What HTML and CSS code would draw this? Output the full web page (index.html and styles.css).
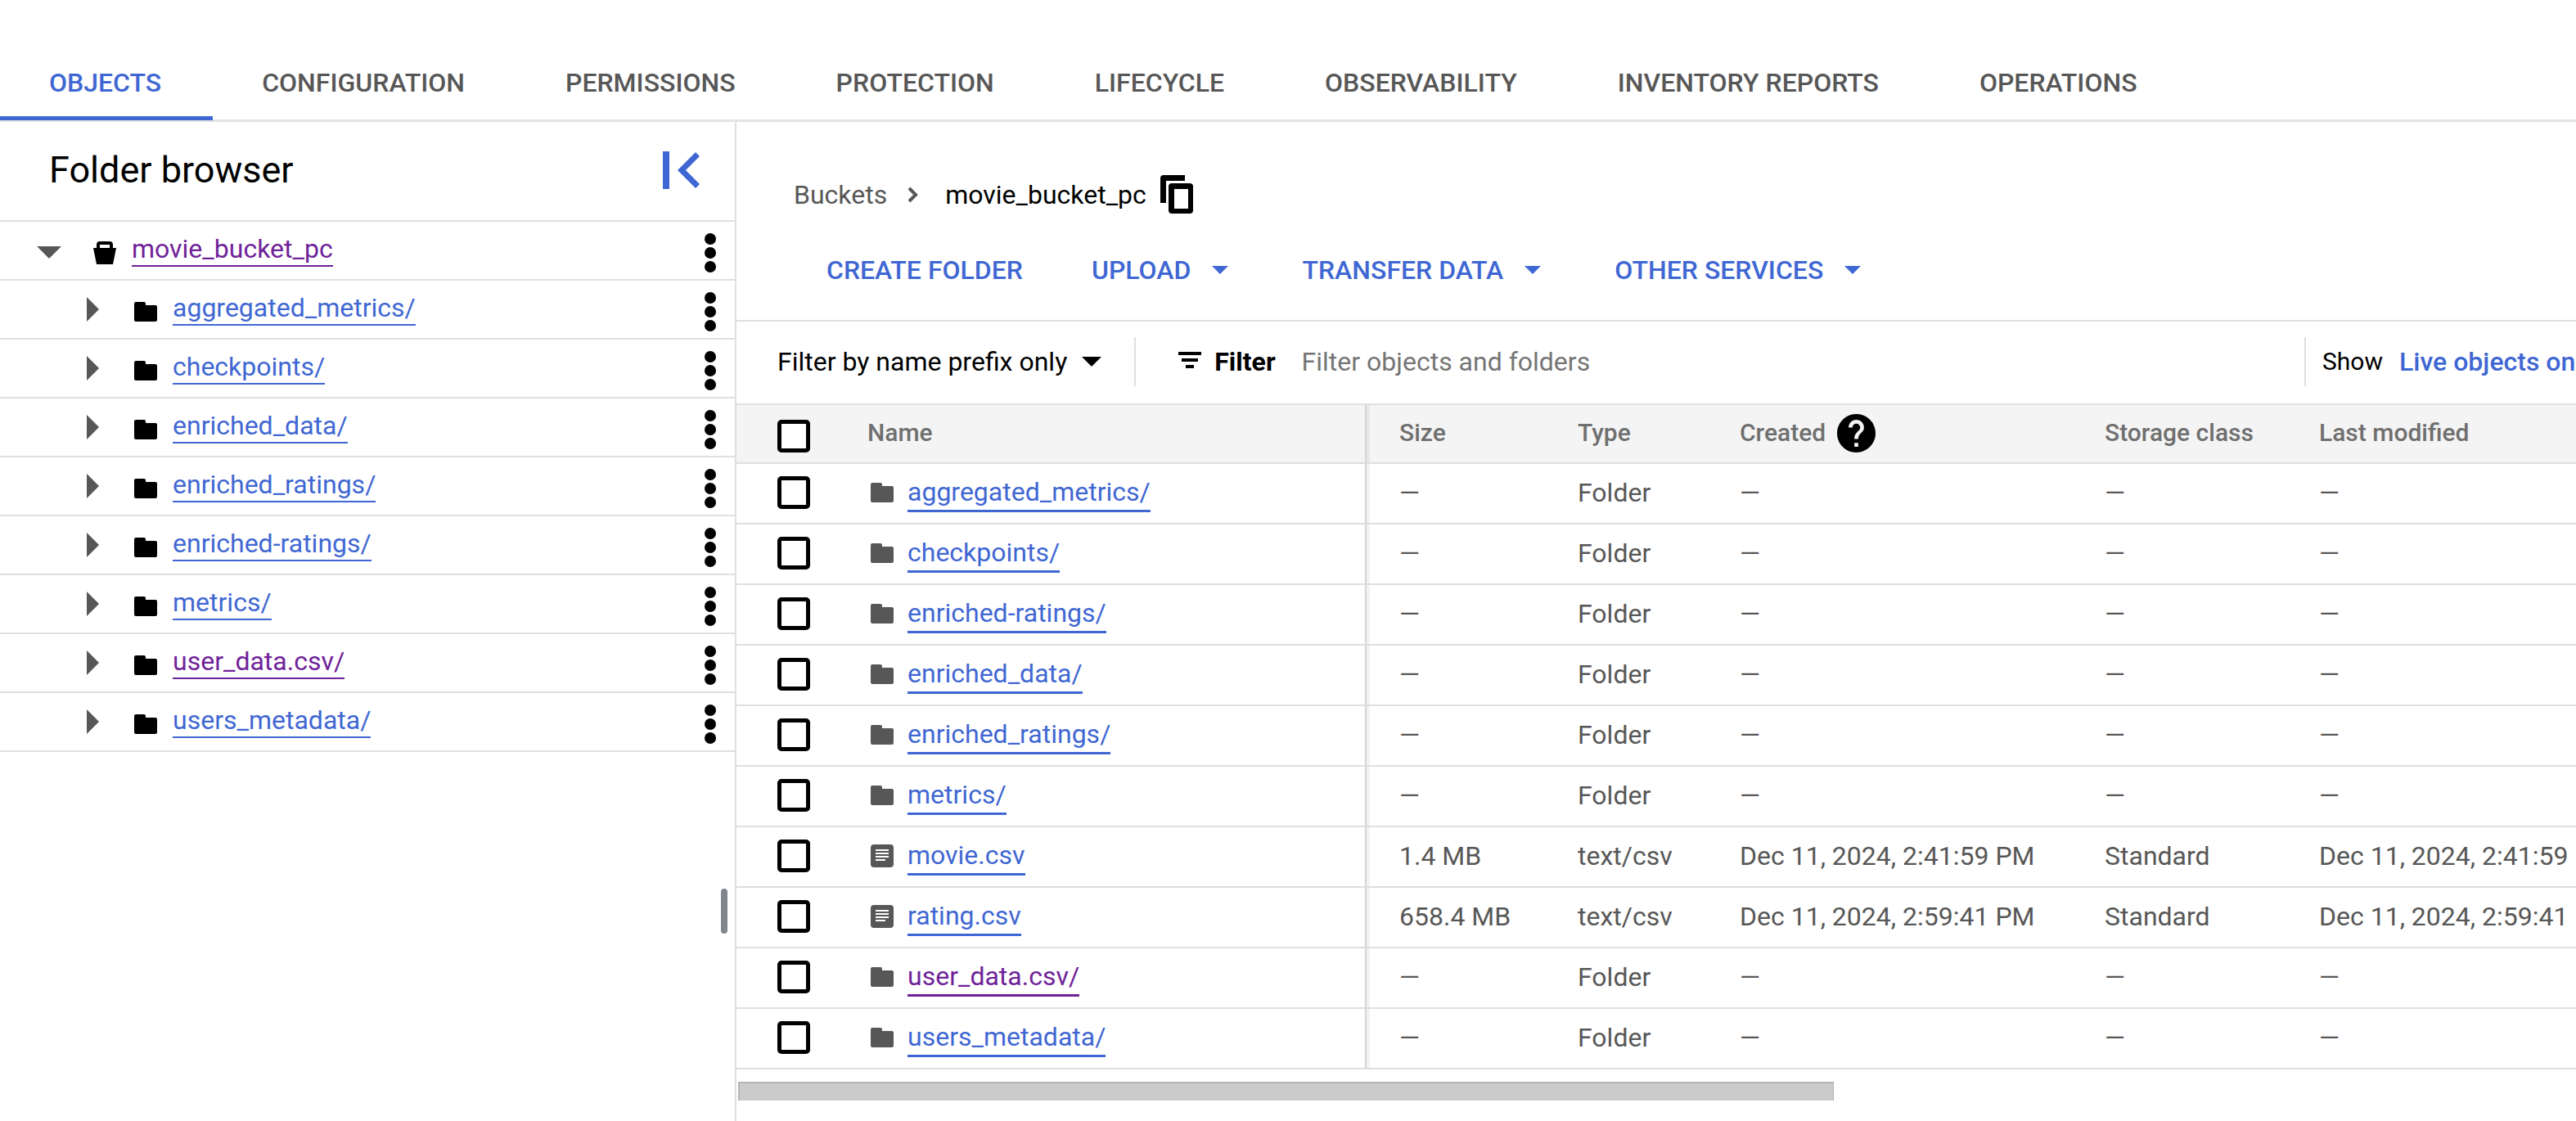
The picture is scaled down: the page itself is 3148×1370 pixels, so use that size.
FILE: index.html
```html
<!DOCTYPE html>
<html lang="en">
<head>
<meta charset="utf-8">
<title>Bucket details</title>
<link rel="stylesheet" href="styles.css">
</head>
<body>
<svg class="sprite" aria-hidden="true">
  <symbol id="folder" viewBox="0 0 28 24"><path d="M2 0h10q2 0 2 2v2h12q2 0 2 2v16q0 2-2 2H2q-2 0-2-2V2q0-2 2-2z"/></symbol>
  <symbol id="file" viewBox="0 0 28 28"><path fill-rule="evenodd" d="M4 0h20q4 0 4 4v20q0 4-4 4H4q-4 0-4-4V4q0-4 4-4zM6 6v2h16V6zM6 10v2h16v-2zM6 14v2h16v-2zM6 18v2h12v-2z"/></symbol>
  <symbol id="bucket" viewBox="0 0 28 28"><path fill-rule="evenodd" d="M4 8V4q0-4 4-4h12q4 0 4 4v4h4l-4 20H4L0 8zM8 8h12V4H8z"/></symbol>
  <symbol id="dots" viewBox="0 0 14 48"><circle cx="7" cy="7" r="7"/><circle cx="7" cy="24" r="7"/><circle cx="7" cy="41" r="7"/></symbol>
  <symbol id="right" viewBox="0 0 16 30"><path d="M0 0l15 15L0 30z"/></symbol>
  <symbol id="down" viewBox="0 0 30 16"><path d="M0 0h30L15 15z"/></symbol>
  <symbol id="caret" viewBox="0 0 20 10"><path d="M0 0h20L10 10z"/></symbol>
</svg>

<nav class="tabs">
  <a class="tab active" href="#objects">OBJECTS</a>
  <a class="tab" href="#configuration">CONFIGURATION</a>
  <a class="tab" href="#permissions">PERMISSIONS</a>
  <a class="tab" href="#protection">PROTECTION</a>
  <a class="tab" href="#lifecycle">LIFECYCLE</a>
  <a class="tab" href="#observability">OBSERVABILITY</a>
  <a class="tab" href="#inventory">INVENTORY REPORTS</a>
  <a class="tab" href="#operations">OPERATIONS</a>
</nav>

<div class="workspace">
  <aside class="browser">
    <header class="browser-head">
      <h2>Folder browser</h2>
      <button class="icon-btn" aria-label="Collapse folder browser"><svg width="46" height="46" viewBox="0 0 46 46"><path d="M0 0h8v46H0z"/><path d="M40 1l5 5-17 17 17 17-5 5-22-22z"/></svg></button>
    </header>
    <ul class="tree">
      <li class="node root"><button class="toggle" aria-label="Collapse"><svg width="30" height="16"><use href="#down"/></svg></button><svg class="kind" width="28" height="28"><use href="#bucket"/></svg><a class="visited" href="#b">movie_bucket_pc</a><button class="more" aria-label="More actions"><svg width="14" height="48"><use href="#dots"/></svg></button></li>
      <li class="node"><button class="toggle" aria-label="Expand"><svg width="16" height="30"><use href="#right"/></svg></button><svg class="kind" width="28" height="24"><use href="#folder"/></svg><a href="#f">aggregated_metrics/</a><button class="more" aria-label="More actions"><svg width="14" height="48"><use href="#dots"/></svg></button></li>
      <li class="node"><button class="toggle" aria-label="Expand"><svg width="16" height="30"><use href="#right"/></svg></button><svg class="kind" width="28" height="24"><use href="#folder"/></svg><a href="#f">checkpoints/</a><button class="more" aria-label="More actions"><svg width="14" height="48"><use href="#dots"/></svg></button></li>
      <li class="node"><button class="toggle" aria-label="Expand"><svg width="16" height="30"><use href="#right"/></svg></button><svg class="kind" width="28" height="24"><use href="#folder"/></svg><a href="#f">enriched_data/</a><button class="more" aria-label="More actions"><svg width="14" height="48"><use href="#dots"/></svg></button></li>
      <li class="node"><button class="toggle" aria-label="Expand"><svg width="16" height="30"><use href="#right"/></svg></button><svg class="kind" width="28" height="24"><use href="#folder"/></svg><a href="#f">enriched_ratings/</a><button class="more" aria-label="More actions"><svg width="14" height="48"><use href="#dots"/></svg></button></li>
      <li class="node"><button class="toggle" aria-label="Expand"><svg width="16" height="30"><use href="#right"/></svg></button><svg class="kind" width="28" height="24"><use href="#folder"/></svg><a href="#f">enriched-ratings/</a><button class="more" aria-label="More actions"><svg width="14" height="48"><use href="#dots"/></svg></button></li>
      <li class="node"><button class="toggle" aria-label="Expand"><svg width="16" height="30"><use href="#right"/></svg></button><svg class="kind" width="28" height="24"><use href="#folder"/></svg><a href="#f">metrics/</a><button class="more" aria-label="More actions"><svg width="14" height="48"><use href="#dots"/></svg></button></li>
      <li class="node"><button class="toggle" aria-label="Expand"><svg width="16" height="30"><use href="#right"/></svg></button><svg class="kind" width="28" height="24"><use href="#folder"/></svg><a class="visited" href="#f">user_data.csv/</a><button class="more" aria-label="More actions"><svg width="14" height="48"><use href="#dots"/></svg></button></li>
      <li class="node"><button class="toggle" aria-label="Expand"><svg width="16" height="30"><use href="#right"/></svg></button><svg class="kind" width="28" height="24"><use href="#folder"/></svg><a href="#f">users_metadata/</a><button class="more" aria-label="More actions"><svg width="14" height="48"><use href="#dots"/></svg></button></li>
    </ul>
    <div class="grip"></div>
  </aside>

  <main class="content">
    <div class="crumbs">
      <a href="#buckets">Buckets</a>
      <svg class="chev" width="14" height="20" viewBox="0 0 14 20"><path d="M2 2l8 8-8 8" fill="none" stroke="currentColor" stroke-width="4"/></svg>
      <span>movie_bucket_pc</span>
      <button class="icon-btn copy" aria-label="Copy bucket name"><svg width="40" height="48" viewBox="0 0 40 48"><path d="M30 0H4Q0 0 0 4v30h7V7h23z"/><path fill-rule="evenodd" d="M14 10h22q4 0 4 4v29q0 4-4 4H14q-4 0-4-4V14q0-4 4-4zm3 7v24h17V17z"/></svg></button>
    </div>
    <div class="actions">
      <button class="action">CREATE FOLDER</button>
      <button class="action menu">UPLOAD<svg width="20" height="10"><use href="#caret"/></svg></button>
      <button class="action menu">TRANSFER DATA<svg width="20" height="10"><use href="#caret"/></svg></button>
      <button class="action menu">OTHER SERVICES<svg width="20" height="10"><use href="#caret"/></svg></button>
    </div>
    <div class="filter-bar">
      <button class="prefix">Filter by name prefix only<svg width="24" height="12" viewBox="0 0 20 10"><use href="#caret"/></svg></button>
      <label class="filter-label" for="filter"><svg width="28" height="20" viewBox="0 0 28 20"><path d="M0 0h28v4H0zM4 8h20v4H4zM9 16h10v4H9z"/></svg>Filter</label>
      <input id="filter" class="filter-input" type="text" placeholder="Filter objects and folders">
      <div class="show"><span>Show</span><a href="#show">Live objects only</a></div>
    </div>
    <div class="table-wrap">
      <table>
        <colgroup><col class="c-check"><col class="c-name"><col class="c-size"><col class="c-type"><col class="c-created"><col class="c-storage"><col class="c-modified"></colgroup>
        <thead><tr><th><input type="checkbox" aria-label="Select all"></th><th class="name">Name</th><th>Size</th><th>Type</th><th><span class="with-help">Created<svg width="47" height="47" viewBox="2 2 20 20"><path d="M12 2C6.480 2 2 6.480 2 12s4.480 10 10 10 10-4.480 10-10S17.520 2 12 2zm1 17h-2v-2h2v2zm2.070-7.750l-.9.920C13.450 12.900 13 13.500 13 15h-2v-.5c0-1.100.450-2.100 1.170-2.830l1.240-1.260c.370-.360.590-.860.590-1.410 0-1.100-.9-2-2-2s-2 .9-2 2H8c0-2.210 1.790-4 4-4s4 1.790 4 4c0 .880-.360 1.680-.930 2.250z"/></svg></span></th><th>Storage class</th><th>Last modified</th></tr></thead>
        <tbody>
          <tr><td><input type="checkbox" aria-label="aggregated_metrics/"></td><td class="name"><span><svg width="28" height="24"><use href="#folder"/></svg><a href="#o">aggregated_metrics/</a></span></td><td>—</td><td>Folder</td><td>—</td><td>—</td><td>—</td></tr>
          <tr><td><input type="checkbox" aria-label="checkpoints/"></td><td class="name"><span><svg width="28" height="24"><use href="#folder"/></svg><a href="#o">checkpoints/</a></span></td><td>—</td><td>Folder</td><td>—</td><td>—</td><td>—</td></tr>
          <tr><td><input type="checkbox" aria-label="enriched-ratings/"></td><td class="name"><span><svg width="28" height="24"><use href="#folder"/></svg><a href="#o">enriched-ratings/</a></span></td><td>—</td><td>Folder</td><td>—</td><td>—</td><td>—</td></tr>
          <tr><td><input type="checkbox" aria-label="enriched_data/"></td><td class="name"><span><svg width="28" height="24"><use href="#folder"/></svg><a href="#o">enriched_data/</a></span></td><td>—</td><td>Folder</td><td>—</td><td>—</td><td>—</td></tr>
          <tr><td><input type="checkbox" aria-label="enriched_ratings/"></td><td class="name"><span><svg width="28" height="24"><use href="#folder"/></svg><a href="#o">enriched_ratings/</a></span></td><td>—</td><td>Folder</td><td>—</td><td>—</td><td>—</td></tr>
          <tr><td><input type="checkbox" aria-label="metrics/"></td><td class="name"><span><svg width="28" height="24"><use href="#folder"/></svg><a href="#o">metrics/</a></span></td><td>—</td><td>Folder</td><td>—</td><td>—</td><td>—</td></tr>
          <tr><td><input type="checkbox" aria-label="movie.csv"></td><td class="name"><span><svg width="28" height="28"><use href="#file"/></svg><a href="#o">movie.csv</a></span></td><td>1.4 MB</td><td>text/csv</td><td>Dec 11, 2024, 2:41:59 PM</td><td>Standard</td><td>Dec 11, 2024, 2:41:59 PM</td></tr>
          <tr><td><input type="checkbox" aria-label="rating.csv"></td><td class="name"><span><svg width="28" height="28"><use href="#file"/></svg><a href="#o">rating.csv</a></span></td><td>658.4 MB</td><td>text/csv</td><td>Dec 11, 2024, 2:59:41 PM</td><td>Standard</td><td>Dec 11, 2024, 2:59:41 PM</td></tr>
          <tr><td><input type="checkbox" aria-label="user_data.csv/"></td><td class="name"><span><svg width="28" height="24"><use href="#folder"/></svg><a class="visited" href="#o">user_data.csv/</a></span></td><td>—</td><td>Folder</td><td>—</td><td>—</td><td>—</td></tr>
          <tr><td><input type="checkbox" aria-label="users_metadata/"></td><td class="name"><span><svg width="28" height="24"><use href="#folder"/></svg><a href="#o">users_metadata/</a></span></td><td>—</td><td>Folder</td><td>—</td><td>—</td><td>—</td></tr>
        </tbody>
      </table>
    </div>
    <div class="scrollbar"><div class="thumb"></div></div>
  </main>
</div>
</body>
</html>
```

FILE: styles.css
```css
* { box-sizing: border-box; }
:root { --blue: #3f67d3; --purple: #6f2299; --line: #dfdfdf; --grey: #575757; }
body { margin: 0; min-height: 100vh; display: flex; flex-direction: column; overflow-x: hidden; background: #fff; color: #000; font: 32px/48px Roboto, sans-serif; }
button, input { font: inherit; color: inherit; }
button { padding: 0; border: 0; background: none; cursor: pointer; }
a { color: var(--blue); text-decoration: none; }
svg { display: block; flex: none; fill: currentColor; }
.sprite { position: absolute; width: 0; height: 0; }

.tabs { display: flex; padding-top: 56px; border-bottom: 3px solid #e4e4e4; }
.tab { height: 91px; margin-bottom: -1px; padding: 21px 63px 0 60px; border-bottom: 5px solid transparent; color: var(--grey); font-weight: 500; white-space: nowrap; }
.tab.active { color: var(--blue); border-color: var(--blue); }

.workspace { flex: 1; display: grid; grid-template-columns: 900px minmax(0, 1fr); }
.browser { position: relative; border-right: 2px solid var(--line); }
.browser-head { display: flex; align-items: center; justify-content: space-between; height: 122px; padding: 0 42px 2px 60px; border-bottom: 2px solid var(--line); }
.browser-head h2 { margin: 0; font-size: 45px; font-weight: 400; line-height: 56px; }
.browser-head button { color: var(--blue); }
.tree { margin: 0; padding: 0; list-style: none; }
.node { display: flex; align-items: center; height: 72px; padding: 0 23px 0 106px; border-bottom: 2px solid var(--line); }
.node.root { padding-left: 45px; }
.toggle { width: 58px; color: var(--grey); }
.root .toggle { width: 69px; margin-top: 6px; }
.node .kind { margin-top: 6px; margin-right: 19px; }
.node a { padding-bottom: 2px; border-bottom: 2px solid currentColor; line-height: 36px; }
.node a.visited, .name a.visited { color: var(--purple); }
.more { margin-top: 6px; margin-left: auto; }
.grip { position: absolute; right: 9px; top: 937px; width: 8px; height: 55px; border-radius: 4px; background: #80868b; }

.crumbs { display: flex; align-items: center; height: 90px; margin-top: 44px; padding-left: 70px; }
.crumbs a, .chev { color: var(--grey); }
.chev { margin: 0 32px 0 25px; }
.copy { margin-left: 17px; }
.actions { display: flex; align-items: center; gap: 84px; height: 110px; padding: 0 110px 14px; border-bottom: 2px solid var(--line); }
.action { display: flex; align-items: center; gap: 26px; color: var(--blue); font-weight: 500; white-space: nowrap; }
.action.menu { padding-right: 6px; }
.filter-bar { display: flex; align-items: center; height: 102px; padding: 0 0 2px 50px; border-bottom: 2px solid var(--line); }
.prefix { display: flex; align-items: center; gap: 18px; height: 60px; padding-right: 40px; border-right: 2px solid var(--line); white-space: nowrap; }
.filter-label { display: flex; align-items: center; gap: 16px; margin-left: 52px; font-weight: 700; }
.filter-label svg { margin-bottom: 4px; }
.filter-input { flex: 1; min-width: 0; margin-left: 32px; padding: 0; border: 0; outline: 0; }
.filter-input::placeholder { color: #757575; opacity: 1; }
.show { display: flex; align-items: center; gap: 20px; width: 332px; height: 60px; padding-left: 20px; border-left: 2px solid var(--line); white-space: nowrap; overflow: hidden; }
.show span { font-size: 30px; }
.show a { font-weight: 500; }

.table-wrap { overflow: hidden; }
table { width: 3770px; table-layout: fixed; border-collapse: separate; border-spacing: 0; }
.c-check { width: 160px; } .c-name { width: 610px; } .c-size { width: 218px; } .c-type { width: 198px; } .c-created { width: 446px; } .c-storage { width: 262px; }
th, td { height: 74px; padding: 0 0 2px 40px; border-bottom: 2px solid var(--line); text-align: left; white-space: nowrap; line-height: 40px; }
th { height: 72px; background: #f4f4f4; color: #6f6f6f; font-size: 30px; font-weight: 500; }
td { color: var(--grey); }
th:first-child, td:first-child { padding-left: 50px; }
th:first-child { padding-top: 8px; }
.name { padding-left: 0; border-right: 2px solid #d5d5d5; }
.name + * { box-shadow: inset 4px 0 rgba(0, 0, 0, .05); }
.name span { display: flex; align-items: center; gap: 17px; padding-left: 4px; }
.name a { border-bottom: 3px solid currentColor; line-height: 44px; }
.with-help { display: flex; align-items: center; gap: 14px; }
.with-help svg { color: #000; }
input[type="checkbox"] { display: block; appearance: none; width: 40px; height: 40px; margin: 0; border: 5px solid #000; border-radius: 5px; background: #fff; }
.scrollbar { margin: 15px 0 0 2px; }
/* thumb length is the visible share of the table's full width */
.thumb { width: calc(100% * 2248 / 3770); height: 23px; border: solid #b5b5b5; border-width: 2px 1px 0 2px; background: #cbcbcb; }
```
